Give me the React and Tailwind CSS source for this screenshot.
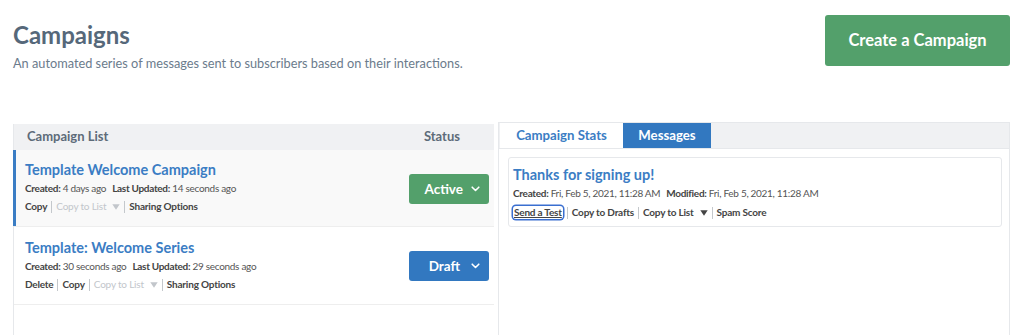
import React from "react";

const font = { fontFamily: '"Lato", "Liberation Sans", sans-serif' };

function Chevron() {
  return (
    <svg width="9" height="6" viewBox="0 0 9 6" fill="none">
      <path d="M1.2 1.2 L4.5 4.5 L7.8 1.2" stroke="white" strokeWidth="1.6" strokeLinecap="round" strokeLinejoin="round" />
    </svg>
  );
}

function Tri({ color = "#444" }) {
  return (
    <svg width="8" height="6" viewBox="0 0 8 6" className="inline-block ml-[6px]">
      <path d="M0.3 0.3 H7.7 L4 5.7 Z" fill={color} />
    </svg>
  );
}

const Sep = () => <span className="mx-[4px] inline-block w-px h-[12px] bg-[#c4c8cc]" />;

function Meta({ a, b, c, d }) {
  return (
    <div className="text-[10px] leading-[13px] tracking-[-0.3px] text-[#555]">
      <b className="text-[#444]">{a}</b> {b}
      <b className="text-[#444] ml-[6px]">{c}</b> {d}
    </div>
  );
}

export default function App() {
  return (
    <div className="w-[1024px] h-[335px] bg-white overflow-hidden text-[#444]" style={font}>
      <div className="h-[81px] flex justify-between pl-[13px] pr-[14px] pt-[15px]">
        <div>
          <h1 className="mt-[5px] text-[24px] leading-[30px] font-bold text-[#56687a]">Campaigns</h1>
          <p className="mt-[5px] text-[12.75px] leading-[16px] text-[#6b7b8c]">
            An automated series of messages sent to subscribers based on their interactions.
          </p>
        </div>
        <button className="w-[185px] h-[51px] rounded-[3px] bg-[#53a06b] text-white text-[16.5px] font-bold">
          Create a Campaign
        </button>
      </div>

      <div className="flex gap-[4px] pl-[13px] mt-[41px]">
        <div className="w-[481px] border-l border-[#e6e8eb] h-[220px] mt-[2px]">
          <div className="h-[26px] bg-[#f0f1f3] flex items-center justify-between pl-[13px] pr-[34px] text-[13px] font-bold text-[#5d6b79]">
            <span>Campaign List</span>
            <span>Status</span>
          </div>
          <div className="relative bg-[#f9f9f9] h-[77px] border-b border-[#eeeeee] flex justify-between pl-[11px] pr-[5px]">
            <div className="absolute left-[-1px] top-0 bottom-0 w-[3px] bg-[#3b7dc4]" />
            <div className="pt-[11px]">
              <div className="text-[14.5px] leading-[18px] font-bold text-[#3b7dc4]">Template Welcome Campaign</div>
              <div className="mt-[3px]">
                <Meta a="Created:" b="4 days ago" c="Last Updated:" d="14 seconds ago" />
              </div>
              <div className="text-[10px] leading-[13px] tracking-[-0.2px] mt-[5px] font-bold text-[#444] flex items-center">
                <span>Copy</span>
                <Sep />
                <span className="text-[#c2c6cb] font-normal">Copy to List</span>
                <Tri color="#c2c6cb" />
                <Sep />
                <span>Sharing Options</span>
              </div>
            </div>
            <button className="mt-[24px] w-[80px] h-[30px] rounded-[3px] bg-[#53a06b] text-white text-[13.5px] font-bold flex items-center justify-end pr-[9px] gap-[8px]">
              Active <Chevron />
            </button>
          </div>
          <div className="bg-white h-[78px] border-b border-[#eeeeee] flex justify-between pl-[11px] pr-[5px]">
            <div className="pt-[12px]">
              <div className="text-[14.5px] leading-[18px] font-bold text-[#3b7dc4]">Template: Welcome Series</div>
              <div className="mt-[3px]">
                <Meta a="Created:" b="30 seconds ago" c="Last Updated:" d="29 seconds ago" />
              </div>
              <div className="text-[10px] leading-[13px] tracking-[-0.2px] mt-[5px] font-bold text-[#444] flex items-center">
                <span>Delete</span>
                <Sep />
                <span>Copy</span>
                <Sep />
                <span className="text-[#c2c6cb] font-normal">Copy to List</span>
                <Tri color="#c2c6cb" />
                <Sep />
                <span>Sharing Options</span>
              </div>
            </div>
            <button className="mt-[24px] w-[80px] h-[30px] rounded-[3px] bg-[#3278c0] text-white text-[13.5px] font-bold flex items-center justify-end pr-[9px] gap-[11px]">
              Draft <Chevron />
            </button>
          </div>
        </div>

        <div className="w-[512px] border-x border-t border-[#e6e8eb] h-[220px]">
          <div className="h-[26px] bg-[#f0f1f3] flex pl-[1px] border-b border-[#e6e8eb]">
            <div className="h-[25px] w-[123px] bg-white flex items-center justify-center text-[13.2px] font-bold text-[#3b7dc4]">
              Campaign Stats
            </div>
            <div className="h-[25px] w-[88px] bg-[#3278c0] flex items-center justify-center text-[13.2px] font-bold text-white">
              Messages
            </div>
          </div>
          <div className="pl-[9px] pr-[7px] pt-[8px]">
            <div className="border border-[#e6e8eb] rounded-[3px] h-[70px] pl-[4px] pt-[8px]">
              <div className="text-[14.5px] leading-[18px] font-bold text-[#3b7dc4]">Thanks for signing up!</div>
              <div className="mt-[3px]">
                <Meta a="Created:" b="Fri, Feb 5, 2021, 11:28 AM" c="Modified:" d="Fri, Feb 5, 2021, 11:28 AM" />
              </div>
              <div className="text-[10px] leading-[13px] tracking-[-0.2px] mt-[6px] font-bold text-[#444] flex items-center">
                <span className="ring-[1.5px] ring-[#3a6fd0] rounded-[3px] px-[1px] underline">Send a Test</span>
                <Sep />
                <span>Copy to Drafts</span>
                <Sep />
                <span>Copy to List</span>
                <Tri color="#444" />
                <Sep />
                <span>Spam Score</span>
              </div>
            </div>
          </div>
        </div>
      </div>
    </div>
  );
}
